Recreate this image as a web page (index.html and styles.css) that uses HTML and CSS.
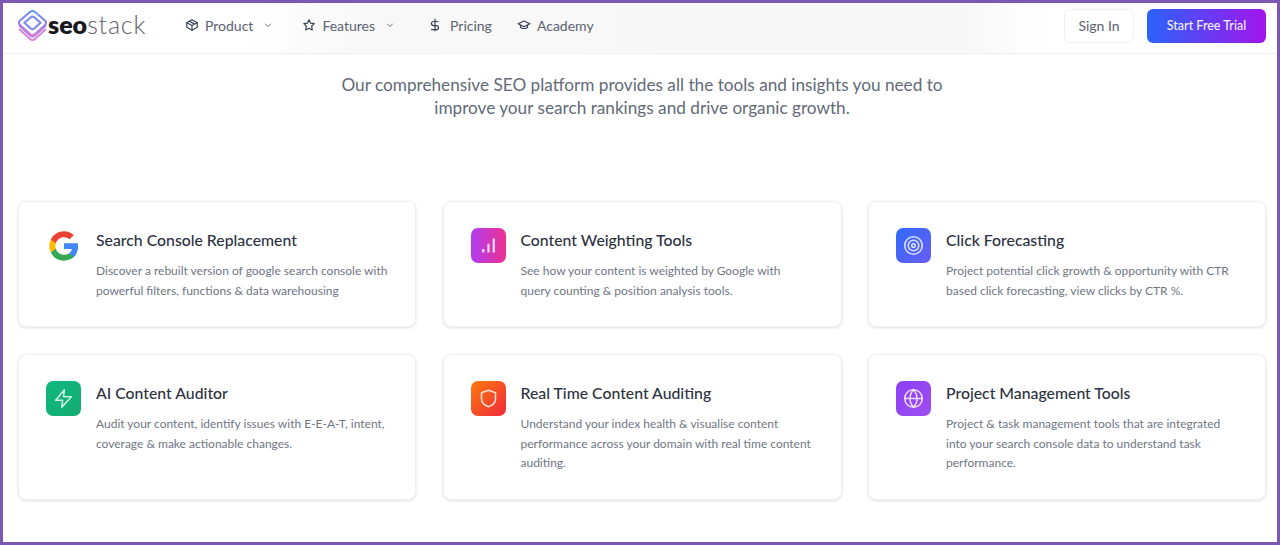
FILE: index.html
```html
<!DOCTYPE html>
<html lang="en">
<head>
  <meta charset="UTF-8">
  <meta name="viewport" content="width=device-width, initial-scale=1.0">
  <title>SEO Stack</title>
  <link rel="stylesheet" href="styles.css">
</head>
<body>
  <div class="frame">
    <header class="topbar">
      <a class="logo" href="#">
        <svg class="logo-mark" width="29" height="32" viewBox="0 0 29 32" fill="none">
          <defs>
            <linearGradient id="logoGrad" x1="0" y1="0" x2="0" y2="1">
              <stop offset="0" stop-color="#5b9bf0"/>
              <stop offset="0.5" stop-color="#8f7fe0"/>
              <stop offset="1" stop-color="#dd7fd6"/>
            </linearGradient>
          </defs>
          <path d="M1.500 19.500 12 29a3.500 3.500 0 0 0 5 0l10.500-9.500" stroke="#d583dc" stroke-width="1.800" stroke-linecap="round"/>
          <path d="M1.500 16 12 25.500a3.500 3.500 0 0 0 5 0L27.500 16" stroke="#b781e2" stroke-width="1.800" stroke-linecap="round"/>
          <path d="M12 2 2 10.500a3 3 0 0 0 0 4.500l10 9a3.500 3.500 0 0 0 5 0l10-9a3 3 0 0 0 0-4.500L17 2a3.500 3.500 0 0 0-5 0Z" fill="#fff" stroke="url(#logoGrad)" stroke-width="2"/>
          <path d="M12.500 7.500 6.500 12.800l6 5.400a3 3 0 0 0 4 0l6-5.400-6-5.300a3 3 0 0 0-4 0Z" stroke="#7f8eea" stroke-width="2.200"/>
        </svg>
        <span class="logo-text"><b>seo</b><span class="logo-light">stack</span></span>
      </a>
      <nav class="nav">
        <a class="nav-item nav-product" href="#">
          <svg class="nav-icon" viewBox="0 0 24 24"><path d="M21 8 12 3 3 8v8l9 5 9-5Z"/><path d="m3 8 9 5 9-5M12 13v8M7.500 5.500l9 5"/></svg>
          Product
          <svg class="chevron" viewBox="0 0 24 24"><path d="m7 10 5 5 5-5"/></svg>
        </a>
        <a class="nav-item nav-features" href="#">
          <svg class="nav-icon" viewBox="0 0 24 24"><path d="m12 3 2.800 5.800 6.200.9-4.500 4.400 1.100 6.300L12 17.400l-5.600 3 1.100-6.300L3 9.700l6.200-.9Z"/></svg>
          Features
          <svg class="chevron" viewBox="0 0 24 24"><path d="m7 10 5 5 5-5"/></svg>
        </a>
        <a class="nav-item nav-pricing" href="#">
          <svg class="nav-icon" viewBox="0 0 24 24"><path d="M12 2v20M17 6H9.500a3.500 3.500 0 0 0 0 7h5a3.500 3.500 0 0 1 0 7H6"/></svg>
          Pricing
        </a>
        <a class="nav-item" href="#">
          <svg class="nav-icon" viewBox="0 0 24 24"><path d="m12 5 10 5-10 5L2 10Z"/><path d="M6 12.500V16c2 2.700 10 2.700 12 0v-3.500"/></svg>
          Academy
        </a>
      </nav>
      <div class="actions">
        <a class="btn btn-ghost" href="#">Sign In</a>
        <a class="btn btn-primary" href="#">Start Free Trial</a>
      </div>
    </header>

    <p class="intro">Our comprehensive SEO platform provides all the tools and insights you need to<br>improve your search rankings and drive organic growth.</p>

    <section class="cards">
      <article class="card">
        <div class="card-icon">
          <svg width="32" height="32" viewBox="0 0 24 24">
            <path fill="#4285f4" d="M22.560 12.250c0-.780-.070-1.530-.200-2.250H12v4.260h5.920a5.060 5.060 0 0 1-2.200 3.320v2.770h3.570c2.080-1.920 3.270-4.740 3.270-8.100Z"/>
            <path fill="#34a853" d="M12 23c2.970 0 5.460-.980 7.280-2.660l-3.570-2.770c-.980.660-2.230 1.060-3.710 1.060-2.860 0-5.290-1.930-6.160-4.530H2.180v2.840A11 11 0 0 0 12 23Z"/>
            <path fill="#fbbc05" d="M5.840 14.090a6.600 6.600 0 0 1 0-4.180V7.070H2.180a11 11 0 0 0 0 9.860l3.660-2.840Z"/>
            <path fill="#ea4335" d="M12 5.380c1.620 0 3.060.560 4.210 1.640l3.150-3.150C17.450 2.090 14.970 1 12 1 7.700 1 3.990 3.470 2.180 7.070l3.660 2.840C6.710 7.310 9.140 5.380 12 5.380Z"/>
          </svg>
        </div>
        <div class="card-body">
          <h3>Search Console Replacement</h3>
          <p>Discover a rebuilt version of google search console with powerful filters, functions &amp; data warehousing</p>
        </div>
      </article>

      <article class="card">
        <div class="card-icon tile tile-pink">
          <svg class="tile-svg tile-bars" viewBox="0 0 24 24"><path d="M6 20v-4M12 20V10M18 20V4"/></svg>
        </div>
        <div class="card-body">
          <h3>Content Weighting Tools</h3>
          <p>See how your content is weighted by Google with<br>query counting &amp; position analysis tools.</p>
        </div>
      </article>

      <article class="card">
        <div class="card-icon tile tile-blue">
          <svg class="tile-svg" viewBox="0 0 24 24"><circle cx="12" cy="12" r="10"/><circle cx="12" cy="12" r="6"/><circle cx="12" cy="12" r="2"/></svg>
        </div>
        <div class="card-body">
          <h3>Click Forecasting</h3>
          <p>Project potential click growth &amp; opportunity with CTR based click forecasting, view clicks by CTR %.</p>
        </div>
      </article>

      <article class="card">
        <div class="card-icon tile tile-green">
          <svg class="tile-svg" viewBox="0 0 24 24"><path d="M13 2 3 14h8l-1 8 11-12h-9Z"/></svg>
        </div>
        <div class="card-body">
          <h3>AI Content Auditor</h3>
          <p>Audit your content, identify issues with E-E-A-T, intent, coverage &amp; make actionable changes.</p>
        </div>
      </article>

      <article class="card">
        <div class="card-icon tile tile-orange">
          <svg class="tile-svg" viewBox="0 0 24 24"><path d="M12 2.500 20 5.500v6.500c0 5-3.500 8-8 9.500-4.500-1.500-8-4.500-8-9.500V5.500Z"/></svg>
        </div>
        <div class="card-body">
          <h3>Real Time Content Auditing</h3>
          <p>Understand your index health &amp; visualise content performance across your domain with real time content auditing.</p>
        </div>
      </article>

      <article class="card">
        <div class="card-icon tile tile-purple">
          <svg class="tile-svg" viewBox="0 0 24 24"><circle cx="12" cy="12" r="10"/><path d="M2 12h20M12 2c-5.300 5.800-5.300 14.200 0 20M12 2c5.300 5.800 5.300 14.200 0 20"/></svg>
        </div>
        <div class="card-body">
          <h3>Project Management Tools</h3>
          <p>Project &amp; task management tools that are integrated into your search console data to understand task performance.</p>
        </div>
      </article>
    </section>
  </div>
</body>
</html>
```

FILE: styles.css
```css
* {
  box-sizing: border-box;
  margin: 0;
  padding: 0;
}

html, body {
  height: 100%;
}

body {
  font-family: 'Lato', 'Open Sans', sans-serif;
  color: #1f2937;
  background: #fff;
  overflow: hidden;
}

a {
  color: inherit;
  text-decoration: none;
}

.frame {
  height: 545px;
  border: 3px solid #7b59b0;
  background: #fff;
}

.topbar {
  display: flex;
  align-items: center;
  height: 51px;
  padding: 0 11px 5px 15px;
  border-bottom: 1px solid #efeff1;
  background: linear-gradient(90deg, #fff 18%, #f8f8f9 28%, #f7f7f8 75%, #fff 82%);
}

.logo {
  display: flex;
  align-items: center;
  width: 167px;
}

.logo-text {
  font-size: 25px;
  line-height: 1;
  margin-left: 1px;
  margin-top: -2px;
}

.logo-text b {
  color: #17181b;
  font-weight: 800;
}

.logo-light {
  color: #5d6168;
  font-weight: 300;
  letter-spacing: 0.8px;
}

.nav {
  display: flex;
  align-items: center;
  flex: 1;
  padding-bottom: 1px;
  font-size: 14px;
  color: #5b6270;
}

.nav-item {
  display: flex;
  align-items: center;
  gap: 6px;
}

.nav-product {
  margin-right: 28px;
}

.nav-features {
  margin-right: 32px;
}

.nav-pricing {
  gap: 8px;
  margin-right: 25px;
}

.nav-icon {
  width: 14px;
  height: 14px;
  fill: none;
  stroke: #374151;
  stroke-width: 2;
  stroke-linecap: round;
  stroke-linejoin: round;
}

.chevron {
  width: 12px;
  height: 12px;
  margin-left: 3px;
  fill: none;
  stroke: #6b7280;
  stroke-width: 2;
  stroke-linecap: round;
  stroke-linejoin: round;
}

.actions {
  display: flex;
  align-items: center;
  gap: 13px;
}

.btn {
  display: flex;
  align-items: center;
  justify-content: center;
  height: 34px;
  border-radius: 6px;
  font-size: 14px;
}

.btn-ghost {
  width: 70px;
  color: #5b6270;
  background: #fff;
  border: 1px solid #f0f0f2;
}

.btn-primary {
  width: 119px;
  color: #eef0fe;
  font-size: 12.500px;
  font-weight: 500;
  background: linear-gradient(90deg, #2b63fb, #a115ec);
}

.intro {
  margin-top: 19px;
  padding-left: 4px;
  text-align: center;
  font-size: 17.200px;
  line-height: 23px;
  color: #626a77;
}

.cards {
  display: grid;
  grid-template-columns: 398px 399px 398px;
  column-gap: 26.500px;
  row-gap: 27px;
  margin: 82px 0 0 15px;
}

.card {
  display: flex;
  gap: 15px;
  padding: 26px 26px 26px 27px;
  background: #fff;
  border: 1px solid #f0f0f2;
  border-radius: 8px;
  box-shadow: 0 1px 3px rgba(0, 0, 0, 0.12);
}

.card-icon {
  flex: none;
  display: flex;
  align-items: center;
  justify-content: center;
  width: 35px;
  height: 35px;
}

.tile {
  border-radius: 7px;
}

.tile-svg {
  width: 21px;
  height: 21px;
  fill: none;
  stroke: rgba(255, 255, 255, 0.8);
  stroke-width: 1.800;
  stroke-linecap: round;
  stroke-linejoin: round;
}

.tile-bars {
  stroke-width: 2.600;
  stroke-linecap: butt;
}

.tile-pink {
  background: linear-gradient(90deg, #b03cf0, #ee3192);
}

.tile-blue {
  background: linear-gradient(135deg, #2f6bfa, #6a5cf5);
}

.tile-green {
  background: linear-gradient(135deg, #10b981, #12ab70);
}

.tile-orange {
  background: linear-gradient(135deg, #fb7a0c, #f0293c);
}

.tile-purple {
  background: linear-gradient(135deg, #8b3ff5, #a04ef0);
}

.card-body h3 {
  font-size: 15.800px;
  line-height: 24px;
  font-weight: 500;
  color: #2c3240;
  margin: -0.500px 0 9.500px;
}

.card-body p {
  font-size: 12px;
  line-height: 19.500px;
  color: #6f7684;
}
```
